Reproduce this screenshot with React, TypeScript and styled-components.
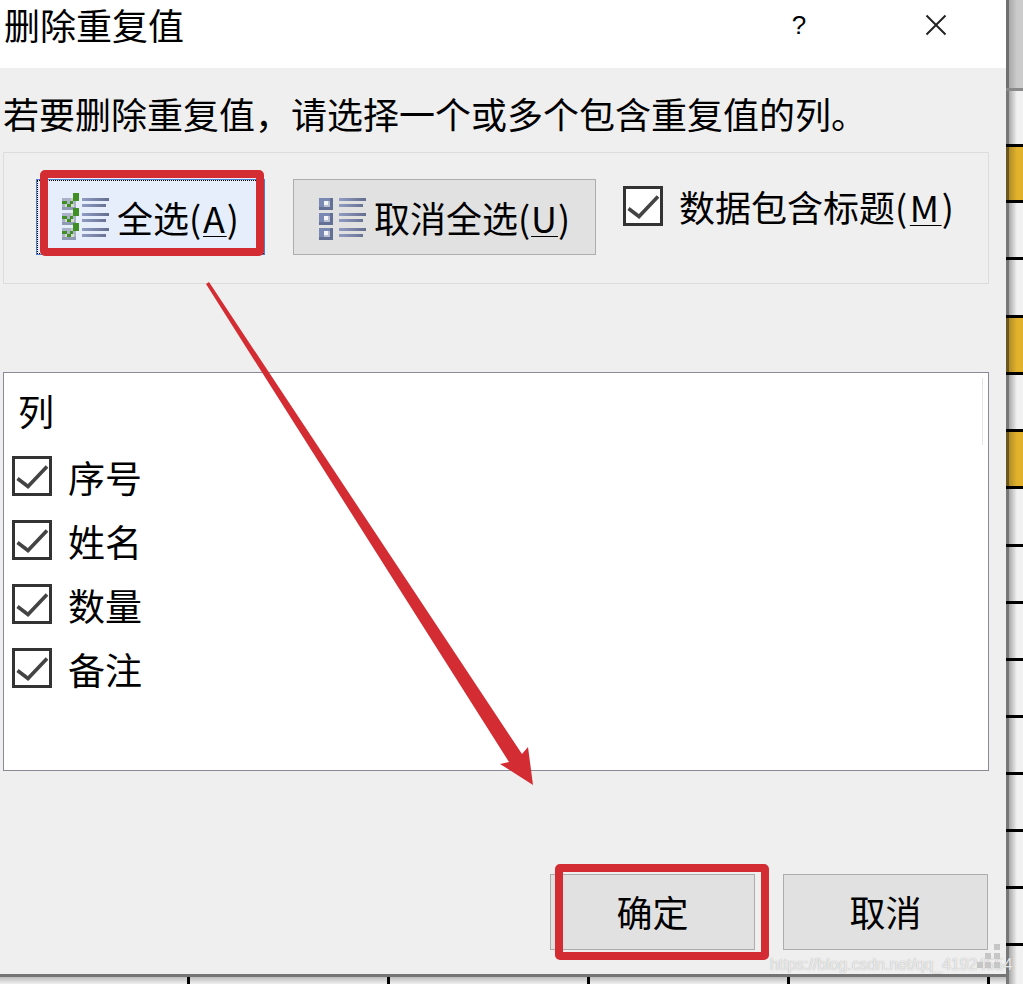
import React from "react";
import styled, { createGlobalStyle } from "styled-components";

const GlobalStyle = createGlobalStyle`
  html, body {
    margin: 0;
    padding: 0;
    background: #efefef;
  }
  * {
    box-sizing: border-box;
  }
`;

const sheetRows = [
  { height: 91, kind: "head" },
  { height: 56 },
  { height: 56, kind: "gold" },
  { height: 57 },
  { height: 58 },
  { height: 57, kind: "gold" },
  { height: 57 },
  { height: 57, kind: "gold" },
  { height: 58 },
  { height: 57 },
  { height: 57 },
  { height: 57 },
  { height: 57 },
  { height: 57 },
  { height: 57 },
  { height: 57 },
  { height: 38, kind: "end" },
];

const columns = ["序号", "姓名", "数量", "备注"];

const CheckIcon = () => (
  <svg width="34" height="34" viewBox="0 0 34 34">
    <path d="M2.5 19.5 L13 27.5 L32 7.5" fill="none" stroke="#444" strokeWidth="3.6" />
  </svg>
);

const ListLines = ({ id }: { id: string }) => (
  <g shapeRendering="crispEdges">
    <defs>
      <linearGradient id={id} gradientUnits="userSpaceOnUse" x1="20" y1="0" x2="47" y2="0">
        <stop offset="0" stopColor="#8f9bc2" />
        <stop offset="1" stopColor="#646e8e" />
      </linearGradient>
    </defs>
    {[5, 20, 35].map((y) => (
      <g key={y}>
        <rect x="20" y={y} width="27" height="3" fill={`url(#${id})`} />
        <rect x="20" y={y + 6} width="24" height="3" fill={`url(#${id})`} />
      </g>
    ))}
  </g>
);

const SelectAllIcon = () => (
  <svg width="47" height="48" viewBox="0 0 47 48">
    {[5, 20, 35].map((y) => (
      <g key={y} shapeRendering="crispEdges">
        <rect x="0" y={y} width="14" height="12" fill="#a9b2c6" />
        <rect x="3" y={y + 6} width="9" height="3" fill="#d6dccb" />
        <rect x="9" y={y} width="5" height="3" fill="#c4ccc4" />
        <rect x="0" y={y + 9} width="14" height="3" fill="#8f9ab4" />
        <rect x="0" y={y + 3} width="5" height="3" fill="#3f8f24" />
        <rect x="5" y={y + 6} width="4" height="3" fill="#3f8f24" />
        <rect x="8" y={y + 3} width="3" height="3" fill="#3f8f24" />
        <rect x="11" y={y - 5} width="6" height="8" fill="#3f8f24" />
      </g>
    ))}
    <ListLines id="select-lines" />
  </svg>
);

const ClearAllIcon = () => (
  <svg width="47" height="48" viewBox="0 0 47 48">
    {[5, 20, 35].map((y) => (
      <g key={y} shapeRendering="crispEdges">
        <rect x="0" y={y} width="14" height="12" fill="#7a88b4" />
        <rect x="11" y={y} width="3" height="12" fill="#646f96" />
        <rect x="0" y={y + 9} width="14" height="3" fill="#646f96" />
        <rect x="5" y={y + 3} width="6" height="6" fill="#b9c0d2" />
        <rect x="5" y={y + 3} width="4" height="4" fill="#f4f5f8" />
      </g>
    ))}
    <ListLines id="clear-lines" />
  </svg>
);

const Arrow = () => (
  <ArrowSvg width="1023" height="984" viewBox="0 0 1023 984">
    <polygon
      points="206,284 209,282 522,754 528,747 533,785 500,764 509,762"
      fill="#d32d33"
    />
  </ArrowSvg>
);

const WatermarkDots = () => (
  <DotsSvg width="24" height="25" viewBox="0 0 24 25">
    {[
      [17, 0],
      [8, 9],
      [17, 9],
      [0, 18],
      [8, 18],
      [17, 18],
    ].map(([x, y]) => (
      <rect key={`${x}-${y}`} x={x} y={y} width="6" height="6" fill="#c6c6c6" />
    ))}
  </DotsSvg>
);

const App = () => {
  return (
    <Page>
      <GlobalStyle />
      <Main>
        <Dialog>
          <TitleBar>
            <Title>删除重复值</Title>
            <HelpButton>?</HelpButton>
            <CloseButton>
              <svg width="22" height="22" viewBox="0 0 22 22">
                <path d="M1.5 1.5 L20.5 20.5 M20.5 1.5 L1.5 20.5" stroke="#222" strokeWidth="2" />
              </svg>
            </CloseButton>
          </TitleBar>
          <Prompt>若要删除重复值，请选择一个或多个包含重复值的列。</Prompt>
          <OptionsGroup>
            <FocusedButton>
              <SelectAllIcon />
              <span>
                全选
                <Mnemonic $spacing={1.8}>
                  (<AccessKey>A</AccessKey>)
                </Mnemonic>
              </span>
              <Highlight $top={-10} $right={0} $bottom={-2} $left={3} />
            </FocusedButton>
            <ToolButton>
              <ClearAllIcon />
              <span>
                取消全选
                <Mnemonic $spacing={0.9}>
                  (<AccessKey>U</AccessKey>)
                </Mnemonic>
              </span>
            </ToolButton>
            <HeaderOption>
              <CheckBox>
                <CheckIcon />
              </CheckBox>
              <span>
                数据包含标题
                <Mnemonic $spacing={2.6}>
                  (<AccessKey>M</AccessKey>)
                </Mnemonic>
              </span>
            </HeaderOption>
          </OptionsGroup>
          <ColumnList>
            <ListHeading>列</ListHeading>
            {columns.map((name) => (
              <ColumnRow key={name}>
                <CheckBox>
                  <CheckIcon />
                </CheckBox>
                <RowLabel>{name}</RowLabel>
              </ColumnRow>
            ))}
            <ListDivider />
          </ColumnList>
          <Footer>
            <DialogButton>
              确定
              <Highlight $top={-11} $right={-15} $bottom={-11} $left={4} />
            </DialogButton>
            <DialogButton>取消</DialogButton>
          </Footer>
        </Dialog>
        <BottomEdge>
          <Tick $width={190} />
          <Tick $width={200} />
          <Tick $width={200} />
          <Tick $width={200} />
          <Tick $width={200} />
        </BottomEdge>
      </Main>
      <SheetEdge>
        {sheetRows.map((row, i) => (
          <SheetRow key={i} $height={row.height} $kind={row.kind} />
        ))}
      </SheetEdge>
      <Arrow />
      <Watermark>https://blog.csdn.net/qq_41924554</Watermark>
      <WatermarkDots />
    </Page>
  );
};

const Page = styled.div`
  position: relative;
  display: flex;
  width: 1023px;
  height: 984px;
  overflow: hidden;
  font-family: "Noto Sans CJK SC", "Noto Sans", sans-serif;
  font-size: 36px;
  color: #000;
`;
const Main = styled.div`
  display: flex;
  flex-direction: column;
  width: 1006px;
`;
const Dialog = styled.div`
  display: flex;
  flex-direction: column;
  height: 974px;
  background: #efefef;
`;
const TitleBar = styled.div`
  display: flex;
  align-items: center;
  flex: 0 0 68px;
  padding: 0 0 18px 4px;
  background: #fff;
`;
const Title = styled.div`
  flex: 1;
  margin-top: -2px;
  line-height: 44px;
`;
const HelpButton = styled.div`
  width: 24px;
  margin-right: 114px;
  font-family: "Liberation Sans", sans-serif;
  font-size: 26px;
  line-height: 28px;
  text-align: center;
`;
const CloseButton = styled.div`
  display: flex;
  margin-right: 59px;
`;
const Prompt = styled.div`
  flex: 0 0 84px;
  padding: 18px 0 0 3px;
  line-height: 54px;
`;
const OptionsGroup = styled.div`
  display: flex;
  flex: 0 0 132px;
  align-items: flex-start;
  width: 986px;
  margin-left: 3px;
  padding: 26px 0 0 32px;
  border: 1px solid #dcdcdc;
`;
const ToolButton = styled.div`
  position: relative;
  display: flex;
  align-items: center;
  gap: 8px;
  width: 303px;
  height: 76px;
  margin-left: 28px;
  padding-left: 25px;
  border: 1px solid #adadad;
  background: #e1e1e1;
  line-height: 48px;
  white-space: nowrap;
`;
const FocusedButton = styled(ToolButton)`
  width: 229px;
  margin-left: 0;
  border-color: #4a7fd8;
  outline: 1px dotted #000;
  outline-offset: -2px;
  background: #e5eefa;
`;
const Highlight = styled.div<{
  $top: number;
  $right: number;
  $bottom: number;
  $left: number;
}>`
  position: absolute;
  top: ${(p) => p.$top}px;
  right: ${(p) => p.$right}px;
  bottom: ${(p) => p.$bottom}px;
  left: ${(p) => p.$left}px;
  border: 8px solid #d32d33;
  border-radius: 5px;
`;
const Mnemonic = styled.span<{ $spacing: number }>`
  letter-spacing: ${(p) => p.$spacing}px;
`;
const AccessKey = styled.span`
  text-decoration: underline;
  text-decoration-thickness: 1px;
  text-underline-offset: 3px;
`;
const HeaderOption = styled.div`
  display: flex;
  align-items: center;
  gap: 16px;
  margin: 7px 0 0 27px;
  line-height: 40px;
  white-space: nowrap;
`;
const CheckBox = styled.div`
  display: flex;
  align-items: center;
  justify-content: center;
  flex: 0 0 40px;
  height: 40px;
  border: 3px solid #333;
  background: #fff;
`;
const ColumnList = styled.div`
  position: relative;
  width: 986px;
  height: 399px;
  margin: 88px 0 0 3px;
  padding: 11px 0 0 8px;
  border: 1px solid #8a8a96;
  background: #fff;
`;
const ListHeading = styled.div`
  margin: 0 0 8px 6px;
  line-height: 52px;
`;
const ColumnRow = styled.div`
  display: flex;
  align-items: center;
  gap: 16px;
  height: 64px;
`;
const RowLabel = styled.span`
  padding-top: 1px;
  font-size: 37px;
  line-height: 50px;
`;
const ListDivider = styled.div`
  position: absolute;
  top: 5px;
  right: 5px;
  width: 1px;
  height: 67px;
  background: #e4e4e4;
`;
const Footer = styled.div`
  display: flex;
  justify-content: flex-end;
  gap: 28px;
  margin-top: 103px;
  padding-right: 18px;
`;
const DialogButton = styled.div`
  position: relative;
  display: flex;
  align-items: center;
  justify-content: center;
  width: 205px;
  height: 76px;
  padding-bottom: 2px;
  border: 1px solid #adadad;
  background: #e1e1e1;
  line-height: 50px;
`;
const BottomEdge = styled.div`
  display: flex;
  flex: 1;
  padding-top: 3px;
  background: linear-gradient(180deg, #747474 3px, #bdbdbd 3px, #efefef 10px);
`;
const Tick = styled.div<{ $width: number }>`
  flex: 0 0 ${(p) => p.$width}px;
  border-right: 3px solid #000;
`;
const SheetEdge = styled.div`
  display: flex;
  flex-direction: column;
  width: 17px;
`;
const rowFill = (kind?: string) => {
  if (kind === "gold") return "#6b5820 3px, #b08c28 3px, #e2b22c 11px";
  if (kind === "head") return "#6f6f6f 3px, #a8a8a8 3px, #cbcbcb 11px";
  return "#777 3px, #a8a8a8 3px, #f1f1f1 11px";
};
const SheetRow = styled.div<{ $height: number; $kind?: string }>`
  flex: 0 0 ${(p) => p.$height}px;
  border-bottom: ${(p) =>
    p.$kind === "end"
      ? "none"
      : p.$kind === "head"
        ? "3px solid #8a8a8a"
        : "3px solid #000"};
  background: linear-gradient(90deg, ${(p) => rowFill(p.$kind)});
`;
const ArrowSvg = styled.svg`
  position: absolute;
  top: 0;
  left: 0;
  pointer-events: none;
`;
const Watermark = styled.div`
  position: absolute;
  top: 954px;
  left: 770px;
  font-family: "Liberation Sans", sans-serif;
  font-size: 15.8px;
  line-height: 22px;
  color: rgba(255, 255, 255, 0.8);
  text-shadow: 0 0 1px rgba(140, 140, 140, 0.9);
  white-space: nowrap;
`;
const DotsSvg = styled.svg`
  position: absolute;
  top: 944px;
  left: 977px;
`;

export default App;
